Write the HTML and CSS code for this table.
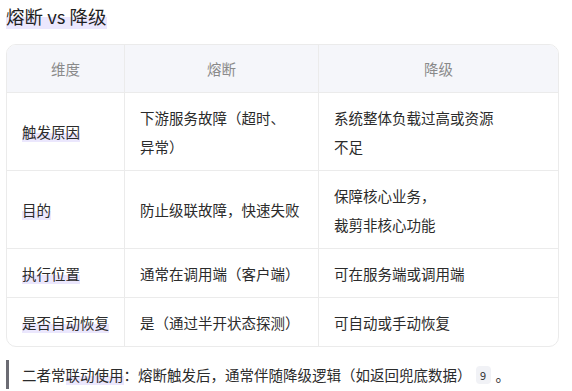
FILE: index.html
```html
<!DOCTYPE html>
<html lang="zh">
<head>
<meta charset="utf-8">
<link rel="stylesheet" href="styles.css">
</head>
<body>
<h3 class="title"><span class="mark">熔断 vs 降级</span></h3>
<div class="table-wrap">
  <table class="cmp">
    <colgroup>
      <col class="c1"><col class="c2"><col class="c3">
    </colgroup>
    <thead>
      <tr><th>维度</th><th>熔断</th><th>降级</th></tr>
    </thead>
    <tbody>
      <tr><td><span class="mark">触发原因</span></td><td>下游服务故障（超时、<span class="nw">异常）</span></td><td class="narrow">系统整体负载过高或资源不足</td></tr>
      <tr><td><span class="mark">目的</span></td><td>防止级联故障，快速失败</td><td class="narrow">保障核心业务，<br>裁剪非核心功能</td></tr>
      <tr><td><span class="mark">执行位置</span></td><td>通常在调用端（客户端）</td><td class="narrow">可在服务端或调用端</td></tr>
      <tr><td><span class="mark">是否自动恢复</span></td><td>是（通过半开状态探测）</td><td class="narrow">可自动或手动恢复</td></tr>
    </tbody>
  </table>
</div>
<blockquote class="note">二者常<span class="mark">联动使用</span>：熔断触发后，通常伴随降级逻辑（如返回兜底数据）<span class="ref">9</span>。</blockquote>
</body>
</html>
```
FILE: styles.css
```css
* { box-sizing: border-box; }
body {
  margin: 0;
  padding: 0 6px;
  background: #ffffff;
  color: #2b2b2b;
  font-family: "Noto Sans CJK SC", "Noto Sans", sans-serif;
  font-size: 14.5px;
}
.mark {
  background: linear-gradient(to bottom, transparent 55%, #ebe7fd 55%);
}
.nw { white-space: nowrap; }
.title {
  margin: 0;
  padding-top: 3px;
  font-size: 18.5px;
  font-weight: normal;
  line-height: 27px;
  color: #1f1f1f;
}
.table-wrap {
  margin-top: 14px;
  width: 553px;
  border: 1px solid #ebebeb;
  border-radius: 10px;
  overflow: hidden;
}
.cmp {
  width: 100%;
  border-collapse: separate;
  border-spacing: 0;
  table-layout: fixed;
}
.c1 { width: 118px; }
.c2 { width: 194px; }
.c3 { width: 239px; }
.cmp th, .cmp td {
  padding: 9.5px 15px;
  line-height: 29px;
  text-align: left;
  vertical-align: middle;
  border-right: 1px solid #ebebeb;
  border-bottom: 1px solid #ebebeb;
}
.cmp td.narrow { padding-right: 58px; }
.cmp th:last-child, .cmp td:last-child { border-right: none; }
.cmp tbody tr:last-child td { border-bottom: none; }
.cmp th {
  background: #f5f6fa;
  color: #8a8a8a;
  font-weight: normal;
  text-align: center;
  padding-top: 9px;
  padding-bottom: 9px;
}
.note {
  margin: 13px 0 0;
  padding: 0 0 0 13px;
  border-left: 3px solid #6b6b73;
  line-height: 29px;
  color: #2b2b2b;
}
.ref {
  display: inline-block;
  margin: 0 5px 0 4px;
  padding: 0 4px;
  min-width: 15px;
  height: 18px;
  line-height: 18px;
  font-size: 11px;
  text-align: center;
  background: #f1f2f6;
  border-radius: 4px;
  color: #333;
  vertical-align: 1px;
}
```
